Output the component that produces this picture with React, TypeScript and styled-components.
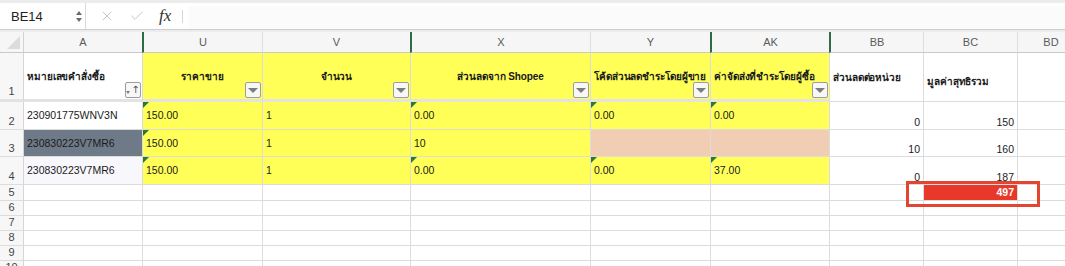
import React from 'react';
import styled, { createGlobalStyle } from 'styled-components';
import { Check, X } from 'lucide-react';

const GlobalStyle = createGlobalStyle`
    html, body {
        margin: 0;
        padding: 0;
        background: #ffffff;
        overflow: hidden;
    }
    body {
        font-family: "Liberation Sans", Arial, "Noto Sans", "DejaVu Sans", sans-serif;
        color: #1b1b1b;
    }
`;

const Window = styled.div`
    width: 1065px;
    height: 266px;
    overflow: hidden;
`;

const ToolbarWrap = styled.div`
    border-top: 3px solid #ececec;
    border-bottom: 2px solid #ececec;
`;

const Toolbar = styled.div`
    display: flex;
    align-items: stretch;
    height: 26px;
    background: #ffffff;
    border-bottom: 1px solid #cdcdcd;
`;

const NameBox = styled.div`
    width: 86px;
    box-sizing: border-box;
    display: flex;
    align-items: center;
    justify-content: space-between;
    padding: 0 2px 0 11px;
    border-right: 1px solid #d9d9d9;
    font-size: 13px;
    color: #222;
`;

const Spinner = styled.div`
    display: flex;
    flex-direction: column;
    gap: 3px;
    align-items: center;
    width: 8px;
`;

const Tri = styled.span<{ $up?: boolean }>`
    width: 0;
    height: 0;
    border-left: 3.5px solid transparent;
    border-right: 3.5px solid transparent;
    ${({ $up }) => ($up ? 'border-bottom: 4px solid #6b6b6b;' : 'border-top: 4px solid #6b6b6b;')}
`;

const Actions = styled.div`
    display: flex;
    align-items: center;
    width: 96px;
    padding-left: 13px;
    box-sizing: border-box;
    gap: 14px;
    color: #c6c6c6;
    svg {
        width: 16px;
        height: 16px;
    }
`;

const Fx = styled.span`
    font-family: "Liberation Serif", "DejaVu Serif", serif;
    font-style: italic;
    font-size: 17px;
    color: #333;
`;

const Divider = styled.div`
    width: 1px;
    height: 13px;
    align-self: center;
    background: #d6d6d6;
`;

const Formula = styled.div`
    flex: 1;
    margin: 3px 0 0 6px;
    background: #fbfbfb;
`;

const Sheet = styled.div`
    position: relative;
    display: grid;
    grid-template-columns: 24px 119px 120px 148px 180px 120px 119px 94px 94px 67px;
    grid-template-rows: 21px 49px 28px 27px 28px 16px 15px 15px 15px 15px 15px;
    width: max-content;
    font-size: 10.5px;
`;

const Corner = styled.div`
    position: relative;
    background: #f6f6f6;
    border-right: 1px solid #d3d3d3;
    border-bottom: 1px solid #c9c9c9;
    &::after {
        content: '';
        position: absolute;
        right: 3px;
        bottom: 3px;
        width: 0;
        height: 0;
        border-left: 13px solid transparent;
        border-bottom: 13px solid #dcdcdc;
    }
`;

const ColHead = styled.div<{ $gap?: boolean }>`
    display: flex;
    align-items: center;
    justify-content: center;
    background: #f6f6f6;
    color: #5b5b5b;
    font-size: 11px;
    border-right: 1px solid #dedede;
    border-bottom: 1px solid #c9c9c9;
    ${({ $gap }) => ($gap ? 'border-left: 2px solid #2f6b45; margin-left: -1px;' : '')}
`;

const RowHead = styled.div<{ $thick?: boolean }>`
    display: flex;
    align-items: flex-end;
    justify-content: center;
    padding-bottom: 1px;
    background: #f7f7f7;
    color: #454545;
    font-size: 11px;
    line-height: 13px;
    border-right: 1px solid #d6d6d6;
    border-bottom: ${({ $thick }) => ($thick ? '3px solid #e3e3e3' : '1px solid #dcdcdc')};
    box-sizing: border-box;
`;

type Align = 'left' | 'center' | 'right';

const Cell = styled.div<{
    $bg?: string;
    $align?: Align;
    $bottom?: boolean;
    $mark?: boolean;
    $color?: string;
    $bold?: boolean;
    $thick?: boolean;
    $pad?: number;
}>`
    position: relative;
    display: flex;
    align-items: ${({ $bottom }) => ($bottom ? 'flex-end' : 'center')};
    justify-content: ${({ $align }) =>
        $align === 'center' ? 'center' : $align === 'right' ? 'flex-end' : 'flex-start'};
    padding: ${({ $pad }) => ($pad ? `${$pad}px` : '0')} 3px 0 3px;
    background: ${({ $bg }) => $bg || '#ffffff'};
    color: ${({ $color }) => $color || '#1b1b1b'};
    font-weight: ${({ $bold }) => ($bold ? 700 : 400)};
    border-right: 1px solid #dcdcdc;
    border-bottom: ${({ $thick }) => ($thick ? '3px solid #e3e3e3' : '1px solid #dcdcdc')};
    box-sizing: border-box;
    white-space: nowrap;
    line-height: 13px;
    ${({ $mark }) =>
        $mark
            ? `&::before {
                content: '';
                position: absolute;
                left: 0;
                top: 0;
                width: 0;
                height: 0;
                border-top: 6px solid #2c7a2e;
                border-right: 6px solid transparent;
            }`
            : ''}
`;

const HeadText = styled.span`
    font-size: 10px;
    letter-spacing: -0.1px;
    font-weight: 700;
    color: #1a1a1a;
`;

const FilterButton = styled.div`
    position: absolute;
    right: 1px;
    bottom: 1px;
    width: 16px;
    height: 16px;
    box-sizing: border-box;
    border: 1px solid #9d9d9d;
    border-radius: 2px;
    background: #f7f7f7;
    display: flex;
    align-items: center;
    justify-content: center;
    gap: 1px;
`;

const FilterTri = styled.span<{ $small?: boolean }>`
    width: 0;
    height: 0;
    border-left: ${({ $small }) => ($small ? '2.5px' : '5px')} solid transparent;
    border-right: ${({ $small }) => ($small ? '2.5px' : '5px')} solid transparent;
    border-top: ${({ $small }) => ($small ? '3px' : '5px')} solid #7c7c7c;
    margin-top: ${({ $small }) => ($small ? '4px' : '1px')};
`;

const SortArrow = styled.span`
    font-size: 10px;
    line-height: 10px;
    color: #555;
    font-family: "DejaVu Sans", sans-serif;
`;

const Callout = styled.div`
    position: absolute;
    left: 906px;
    top: 149px;
    width: 134px;
    height: 26px;
    box-sizing: border-box;
    border: 3px solid #e24630;
    pointer-events: none;
`;

const YELLOW = '#ffff57';
const PEACH = '#f0cdb3';

type Header = { text: string; align: Align; yellow?: boolean; filter?: 'sort' | 'plain'; pad?: number };

const columns: { key: string; gap?: boolean }[] = [
    { key: 'A' },
    { key: 'U', gap: true },
    { key: 'V' },
    { key: 'X', gap: true },
    { key: 'Y' },
    { key: 'AK', gap: true },
    { key: 'BB', gap: true },
    { key: 'BC' },
    { key: 'BD' },
];

const headers: Header[] = [
    { text: 'หมายเลขคำสั่งซื้อ', align: 'left', filter: 'sort' },
    { text: 'ราคาขาย', align: 'center', yellow: true, filter: 'plain' },
    { text: 'จำนวน', align: 'center', yellow: true, filter: 'plain' },
    { text: 'ส่วนลดจาก Shopee', align: 'center', yellow: true, filter: 'plain' },
    { text: 'โค้ดส่วนลดชำระโดยผู้ขาย', align: 'left', yellow: true, filter: 'plain' },
    { text: 'ค่าจัดส่งที่ชำระโดยผู้ซื้อ', align: 'left', yellow: true, filter: 'plain' },
    { text: 'ส่วนลดต่อหน่วย', align: 'left' },
    { text: 'มูลค่าสุทธิรวม', align: 'left', pad: 8 },
    { text: '', align: 'left' },
];

type Data = { v?: string; bg?: string; mark?: boolean; right?: boolean; color?: string; bold?: boolean };

const Y = (v: string, mark = true): Data => ({ v, bg: YELLOW, mark });
const N = (v: string): Data => ({ v, right: true });

const rows: Data[][] = [
    [{ v: '230901775WNV3N' }, Y('150.00'), Y('1', false), Y('0.00'), Y('0.00'), Y('0.00'), N('0'), N('150'), {}],
    [
        { v: '230830223V7MR6', bg: '#6e7a87' },
        Y('150.00'),
        Y('1', false),
        Y('10', false),
        { bg: PEACH },
        { bg: PEACH },
        N('10'),
        N('160'),
        {},
    ],
    [{ v: '230830223V7MR6', bg: '#f7f7fc' }, Y('150.00'), Y('1', false), Y('0.00'), Y('0.00'), Y('37.00'), N('0'), N('187'), {}],
    [{}, {}, {}, {}, {}, {}, {}, { v: '497', bg: '#e8382a', right: true, color: '#ffffff', bold: true }, {}],
];

const emptyRows = [6, 7, 8, 9, 10];

export default function App() {
    return (
        <Window>
            <GlobalStyle />
            <ToolbarWrap>
                <Toolbar>
                    <NameBox>
                        BE14
                        <Spinner>
                            <Tri $up />
                            <Tri />
                        </Spinner>
                    </NameBox>
                    <Actions>
                        <X strokeWidth={1.5} />
                        <Check strokeWidth={1.5} />
                        <Fx>fx</Fx>
                    </Actions>
                    <Divider />
                    <Formula />
                </Toolbar>
            </ToolbarWrap>
            <Sheet>
                <Corner />
                {columns.map((c) => (
                    <ColHead key={c.key} $gap={c.gap}>
                        {c.key}
                    </ColHead>
                ))}

                <RowHead $thick>1</RowHead>
                {headers.map((h, i) => (
                    <Cell
                        key={`h${i}`}
                        $bg={h.yellow ? YELLOW : undefined}
                        $align={h.align}
                        $thick={i < 6}
                        $pad={h.pad}
                    >
                        <HeadText>{h.text}</HeadText>
                        {h.filter && (
                            <FilterButton>
                                {h.filter === 'sort' ? (
                                    <>
                                        <FilterTri $small />
                                        <SortArrow>↑</SortArrow>
                                    </>
                                ) : (
                                    <FilterTri />
                                )}
                            </FilterButton>
                        )}
                    </Cell>
                ))}

                {rows.map((r, ri) => (
                    <React.Fragment key={`r${ri}`}>
                        <RowHead>{ri + 2}</RowHead>
                        {r.map((d, ci) => (
                            <Cell
                                key={`c${ri}-${ci}`}
                                $bg={d.bg}
                                $mark={d.mark}
                                $align={d.right ? 'right' : 'left'}
                                $bottom={d.right && ri < 3}
                                $color={d.color}
                                $bold={d.bold}
                            >
                                {d.v}
                            </Cell>
                        ))}
                    </React.Fragment>
                ))}

                {emptyRows.map((n) => (
                    <React.Fragment key={`e${n}`}>
                        <RowHead>{n}</RowHead>
                        {columns.map((c) => (
                            <Cell key={`e${n}${c.key}`} />
                        ))}
                    </React.Fragment>
                ))}

                <Callout />
            </Sheet>
        </Window>
    );
}
